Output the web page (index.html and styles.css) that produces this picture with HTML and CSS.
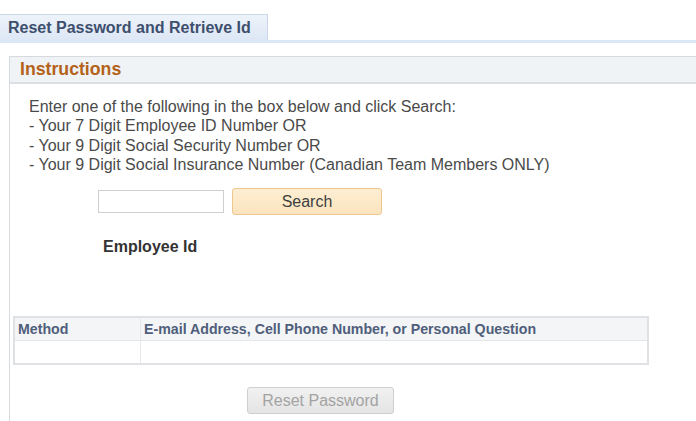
FILE: index.html
```html
<!DOCTYPE html>
<html>
<head>
<meta charset="utf-8">
<link rel="stylesheet" href="styles.css">
</head>
<body>
<div class="tabbar">
  <div class="tab">Reset Password and Retrieve Id</div>
</div>
<div class="section">
  <div class="section-head">Instructions</div>
  <div class="section-body">
    <div class="instructions">
      <div>Enter one of the following in the box below and click Search:</div>
      <div>- Your 7 Digit Employee ID Number OR</div>
      <div>- Your 9 Digit Social Security Number OR</div>
      <div>- Your 9 Digit Social Insurance Number (Canadian Team Members ONLY)</div>
    </div>
    <div class="search-row">
      <input class="search-input" type="text">
      <button class="btn-search">Search</button>
    </div>
    <div class="emp-label">Employee Id</div>
    <table class="grid">
      <thead>
        <tr><th class="col-method">Method</th><th>E-mail Address, Cell Phone Number, or Personal Question</th></tr>
      </thead>
      <tbody>
        <tr><td></td><td></td></tr>
      </tbody>
    </table>
    <div class="reset-row">
      <button class="btn-reset" disabled>Reset Password</button>
    </div>
  </div>
</div>
</body>
</html>
```
FILE: styles.css
```css
html, body {
  margin: 0;
  padding: 0;
  background: #fff;
  font-family: "Liberation Sans", Arial, sans-serif;
}
.tabbar {
  margin-top: 14px;
  border-bottom: 3px solid #dce6f4;
  display: flex;
}
.tab {
  height: 26px;
  box-sizing: border-box;
  padding: 4px 0 0 8px;
  background: linear-gradient(#eef3fa, #dde7f5);
  border: 1px solid #cad7ea;
  border-left: none;
  border-bottom: none;
  font-weight: bold;
  font-size: 16px;
  color: #3d4f6d;
  width: 268px;
  white-space: nowrap;
}
.section {
  margin: 13px 0 0 9px;
  border-left: 1px solid #d6d9de;
}
.section-head {
  height: 28px;
  box-sizing: border-box;
  background: #eff3f5;
  border-top: 1px solid #d6d9de;
  border-bottom: 2px solid #dcdfe4;
  padding: 2px 0 0 10px;
  font-weight: bold;
  font-size: 17.7px;
  color: #b4621a;
}
.section-body {
  padding: 13px 0 8px 0;
}
.instructions {
  padding-left: 19px;
  font-size: 16px;
  line-height: 19.3px;
  color: #4a4a4a;
}
.search-row {
  display: flex;
  align-items: center;
  margin: 14px 0 0 88px;
  gap: 8px;
}
.search-input {
  width: 126px;
  height: 23px;
  box-sizing: border-box;
  border: 1px solid #cfcfcf;
  margin: 0;
}
.btn-search {
  width: 150px;
  height: 27px;
  box-sizing: border-box;
  background: linear-gradient(#fdeed3, #fbe4bd);
  border: 1px solid #eec68e;
  border-radius: 3px;
  font-family: "Liberation Sans", Arial, sans-serif;
  font-size: 16px;
  color: #3f3f3f;
  padding: 0;
}
.emp-label {
  margin: 22px 0 0 93px;
  font-weight: bold;
  font-size: 16px;
  line-height: 19px;
  color: #333;
}
.grid {
  margin: 60px 0 0 3px;
  width: 636px;
  border-collapse: collapse;
  border: 2px solid #dfe1e5;
  font-size: 14.2px;
}
.grid th {
  background: #f4f5f6;
  height: 22px;
  padding: 0 0 0 3px;
  text-align: left;
  font-weight: bold;
  color: #4f5e7b;
  border: 1px solid #e4e6e9;
}
.grid th.col-method {
  width: 122px;
}
.grid td {
  height: 22px;
  padding: 0;
  border: 1px solid #e8e8e8;
  background: #fff;
}
.reset-row {
  margin: 22px 0 0 237px;
}
.btn-reset {
  width: 147px;
  height: 27px;
  box-sizing: border-box;
  background: linear-gradient(#f1f1f1, #e4e4e4);
  border: 1px solid #cfcfcf;
  border-radius: 3px;
  font-family: "Liberation Sans", Arial, sans-serif;
  font-size: 16px;
  color: #a3a3a3;
  padding: 0;
}
```
